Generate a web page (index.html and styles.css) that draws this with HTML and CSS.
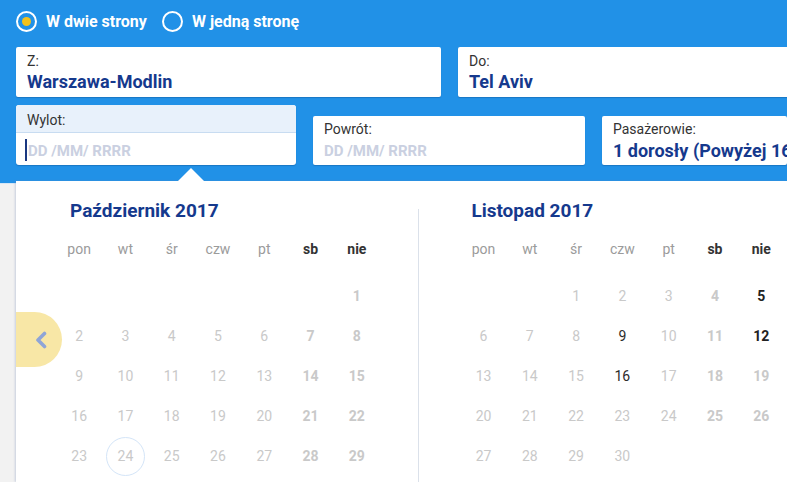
FILE: index.html
```html
<!DOCTYPE html>
<html lang="pl">
<head>
<meta charset="utf-8">
<title>Wyszukiwarka lotów</title>
<link rel="stylesheet" href="styles.css">
</head>
<body>
<header class="search">
  <div class="trip-type">
    <label class="radio"><span class="radio-dot checked"></span>W dwie strony</label>
    <label class="radio"><span class="radio-dot"></span>W jedną stronę</label>
  </div>
  <div class="row row-route">
    <div class="field field-from">
      <span class="field-label">Z:</span>
      <span class="field-value">Warszawa-Modlin</span>
    </div>
    <div class="field field-to">
      <span class="field-label">Do:</span>
      <span class="field-value">Tel Aviv</span>
    </div>
  </div>
  <div class="row row-dates">
    <div class="field-date active">
      <div class="date-head"><span class="field-label">Wylot:</span></div>
      <div class="date-input"><span class="caret-line"></span><span class="placeholder">DD /MM/ RRRR</span></div>
    </div>
    <div class="field field-return">
      <span class="field-label">Powrót:</span>
      <span class="placeholder">DD /MM/ RRRR</span>
    </div>
    <div class="field field-pax">
      <span class="field-label">Pasażerowie:</span>
      <span class="field-value pax">1 dorosły (Powyżej 16</span>
    </div>
  </div>
</header>

<main class="page">
  <section class="datepicker">
    <span class="pointer"></span>
    <button class="prev" aria-label="Poprzedni miesiąc">
      <svg width="14" height="18" viewBox="0 0 14 18"><path d="M10.5 2.5 L4 9 L10.5 15.5" fill="none" stroke="#8fa5d7" stroke-width="3.6" stroke-linecap="round" stroke-linejoin="round"/></svg>
    </button>

    <div class="month month-left">
      <h2 class="month-title">Październik 2017</h2>
      <div class="weekdays">
        <span>pon</span><span>wt</span><span>śr</span><span>czw</span><span>pt</span><span class="we">sb</span><span class="we">nie</span>
      </div>
      <div class="days">
        <span></span><span></span><span></span><span></span><span></span><span></span><span class="off we">1</span>
        <span class="off">2</span><span class="off">3</span><span class="off">4</span><span class="off">5</span><span class="off">6</span><span class="off we">7</span><span class="off we">8</span>
        <span class="off">9</span><span class="off">10</span><span class="off">11</span><span class="off">12</span><span class="off">13</span><span class="off we">14</span><span class="off we">15</span>
        <span class="off">16</span><span class="off">17</span><span class="off">18</span><span class="off">19</span><span class="off">20</span><span class="off we">21</span><span class="off we">22</span>
        <span class="off">23</span><span class="off today"><i>24</i></span><span class="off">25</span><span class="off">26</span><span class="off">27</span><span class="off we">28</span><span class="off we">29</span>
      </div>
    </div>

    <div class="divider"></div>

    <div class="month month-right">
      <h2 class="month-title">Listopad 2017</h2>
      <div class="weekdays">
        <span>pon</span><span>wt</span><span>śr</span><span>czw</span><span>pt</span><span class="we">sb</span><span class="we">nie</span>
      </div>
      <div class="days">
        <span></span><span></span><span class="off">1</span><span class="off">2</span><span class="off">3</span><span class="off we">4</span><span class="on we">5</span>
        <span class="off">6</span><span class="off">7</span><span class="off">8</span><span class="on">9</span><span class="off">10</span><span class="off we">11</span><span class="on we">12</span>
        <span class="off">13</span><span class="off">14</span><span class="off">15</span><span class="on">16</span><span class="off">17</span><span class="off we">18</span><span class="off we">19</span>
        <span class="off">20</span><span class="off">21</span><span class="off">22</span><span class="off">23</span><span class="off">24</span><span class="off we">25</span><span class="off we">26</span>
        <span class="off">27</span><span class="off">28</span><span class="off">29</span><span class="off">30</span>
      </div>
    </div>
  </section>
</main>
</body>
</html>
```

FILE: styles.css
```css
* { box-sizing: border-box; }

html, body {
  margin: 0;
  height: 100%;
  overflow: hidden;
}

body {
  font-family: Roboto, "Liberation Sans", Arial, sans-serif;
  background: #f2f2f2;
  color: #333;
}

/* ---------- search bar ---------- */
.search {
  background: #2191e7;
  height: 184px;
  padding: 10px 0 0 16px;
  overflow: hidden;
  border-bottom: 1px solid #d6e6f5;
}

.trip-type {
  display: flex;
  align-items: center;
  height: 22px;
  gap: 15px;
}

.radio {
  display: flex;
  align-items: center;
  gap: 9px;
  color: #fff;
  font-weight: 700;
  font-size: 16px;
  white-space: nowrap;
}

.radio-dot {
  width: 21px;
  height: 21px;
  border: 2.5px solid #fff;
  border-radius: 50%;
  display: flex;
  align-items: center;
  justify-content: center;
}

.radio-dot.checked::after {
  content: "";
  width: 9px;
  height: 9px;
  border-radius: 50%;
  background: #f3c21c;
}

.row {
  display: flex;
  gap: 17px;
  width: 1200px;
}

.row-route { margin-top: 15px; }

.row-dates {
  margin-top: 8px;
  align-items: flex-end;
}

.field {
  background: #fff;
  border-radius: 2px;
  box-shadow: 0 1px 1px rgba(0, 40, 90, .25);
  display: flex;
  flex-direction: column;
  padding: 6px 11px 0;
}

.field-from { width: 425px; height: 50px; }
.field-to { width: 420px; height: 50px; }

.field-label {
  font-size: 14px;
  line-height: 16px;
  color: #333;
}

.field-value {
  margin-top: 2px;
  font-size: 18px;
  line-height: 22px;
  font-weight: 700;
  color: #15398d;
  white-space: nowrap;
}

.placeholder {
  font-size: 15px;
  line-height: 18px;
  font-weight: 700;
  color: #cad0e1;
  white-space: nowrap;
}

.field-return {
  width: 272px;
  height: 49px;
  padding-top: 5px;
}

.field-return .placeholder { margin-top: 5px; }

.field-pax {
  width: 185px;
  height: 49px;
  padding-top: 5px;
  overflow: hidden;
}

.field-pax .pax {
  margin-top: 3px;
  font-size: 18px;
}

/* active date field */
.field-date {
  width: 280px;
  height: 60px;
  background: #fff;
  border-radius: 3px;
  overflow: hidden;
  box-shadow: 0 1px 1px rgba(0, 40, 90, .25);
}

.date-head {
  height: 28px;
  background: #e8f1fb;
  border-bottom: 1px solid #c8dcf1;
  padding: 5px 11px 0;
}

.date-input {
  height: 32px;
  display: flex;
  align-items: center;
  padding-left: 9px;
}

.caret-line {
  width: 2px;
  height: 22px;
  background: #1a3780;
  margin-right: 1px;
  margin-top: 2px;
}

.date-input .placeholder { margin-top: 3px; }

/* ---------- calendar ---------- */
.page {
  padding-left: 16px;
  margin-top: -3px;
}

.datepicker {
  position: relative;
  display: flex;
  background: #fff;
  height: 301px;
  box-shadow: -1px 0 2px rgba(120, 140, 180, .35);
}

.pointer {
  position: absolute;
  top: -13px;
  left: 162px;
  width: 0;
  height: 0;
  border-left: 13px solid transparent;
  border-right: 13px solid transparent;
  border-bottom: 13px solid #fff;
}

.prev {
  position: absolute;
  left: 0;
  top: 131px;
  width: 46px;
  height: 55px;
  border: 0;
  padding: 0 0 0 18px;
  background: #f8e7a6;
  border-radius: 0 28px 28px 0;
  display: flex;
  align-items: center;
  cursor: pointer;
}

.month {
  width: 405px;
  padding-left: 40px;
}

.month-right {
  width: 370px;
  padding-left: 41px;
}

.divider {
  width: 1px;
  background: #dbe1ea;
  margin-top: 28px;
}

.month-title {
  margin: 18px 0 0 14px;
  font-size: 19px;
  line-height: 24px;
  font-weight: 700;
  color: #15398d;
}

.month-right .month-title { margin-left: 11px; }

.weekdays,
.days {
  width: 324px;
  display: grid;
  grid-template-columns: repeat(7, 1fr);
  text-align: center;
  font-size: 14px;
}

.weekdays {
  margin-top: 6px;
  height: 40px;
  line-height: 40px;
  color: #9b9b9b;
}

.weekdays .we {
  color: #333;
  font-weight: 700;
}

.days {
  margin-top: 7px;
  grid-auto-rows: 40px;
}

.days span {
  display: flex;
  align-items: center;
  justify-content: center;
}

.days .off { color: #c9c9c9; }
.days .on { color: #2b2b2b; }
.days .we { font-weight: 700; }
.days .on.we { color: #222; }

.today i {
  font-style: normal;
  width: 39px;
  height: 39px;
  border: 1px solid #d4e5f8;
  border-radius: 50%;
  display: flex;
  align-items: center;
  justify-content: center;
}
```
